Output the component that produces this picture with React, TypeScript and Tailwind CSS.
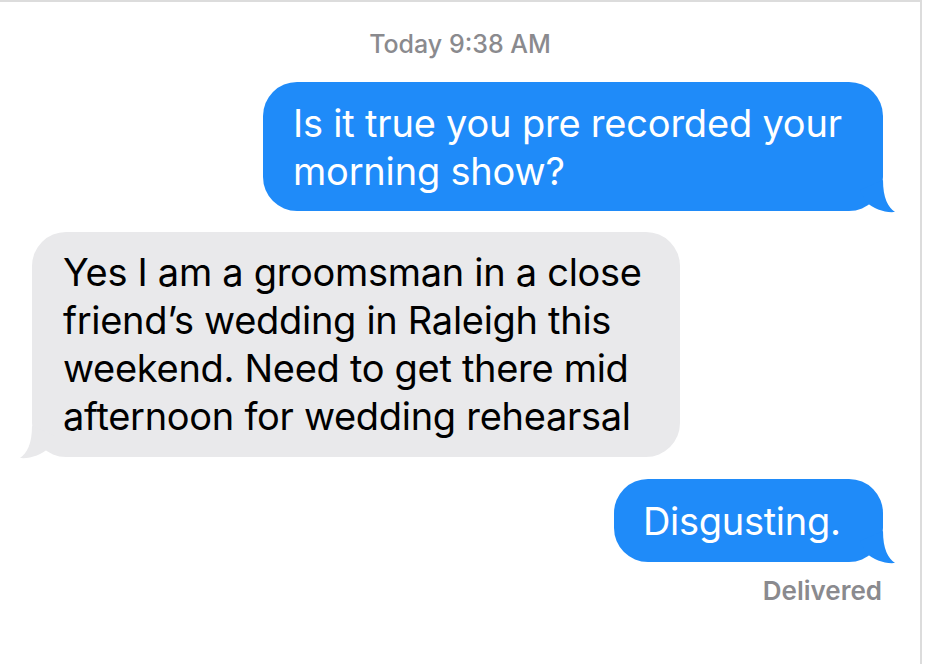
import React from "react";

function Tail({ side, color }: { side: "left" | "right"; color: string }) {
  if (side === "right") {
    return (
      <svg width="50" height="35" viewBox="0 0 50 35" className="absolute -right-[13px] bottom-0 overflow-visible">
        <path d="M37 4 C37 22 42 31 49 36 C39 37 28 33 20 26 L14 14 Z" fill={color} />
      </svg>
    );
  }
  return (
    <svg width="50" height="35" viewBox="0 0 50 35" className="absolute -left-[13px] bottom-0 overflow-visible">
      <g transform="translate(50 0) scale(-1 1)">
        <path d="M37 4 C37 22 42 31 49 36 C39 37 28 33 20 26 L14 14 Z" fill={color} />
      </g>
    </svg>
  );
}

export default function App() {
  return (
    <div className="w-[926px] h-[664px] bg-white flex font-['Inter',sans-serif] overflow-hidden">
      <div className="w-[922px] h-full border-t-2 border-r-2 border-[#dcdcdc] flex flex-col">
        {/* timestamp */}
        <div className="pt-[26px] text-center text-[25px] leading-[32px] font-medium text-[#8a8a8e]">
          Today 9:38 AM
        </div>

        {/* sent */}
        <div className="mt-[22px] flex justify-end pr-[37px]">
          <div className="relative w-[620px] rounded-[34px] bg-[#1f8bf9] pl-[30px] pt-[17px] pb-[16px] text-white text-[38px] leading-[48px] tracking-[-0.2px]">
            Is it true you pre recorded your
            <br />
            morning show?
            <Tail side="right" color="#1f8bf9" />
          </div>
        </div>

        {/* received */}
        <div className="mt-[21px] flex pl-[32px]">
          <div className="relative w-[648px] rounded-[34px] bg-[#e9e9eb] pl-[31px] pt-[16px] pb-[17px] text-black text-[38px] leading-[48px] tracking-[-0.3px]">
            Yes I am a groomsman in a close
            <br />
            friend’s wedding in Raleigh this
            <br />
            weekend. Need to get there mid
            <br />
            afternoon for wedding rehearsal
            <Tail side="left" color="#e9e9eb" />
          </div>
        </div>

        {/* sent */}
        <div className="mt-[22px] flex justify-end pr-[37px]">
          <div className="relative w-[269px] rounded-[34px] bg-[#1f8bf9] pl-[29px] pt-[18px] pb-[17px] text-white text-[38px] leading-[48px] tracking-[-0.3px]">
            Disgusting.
            <Tail side="right" color="#1f8bf9" />
          </div>
        </div>

        <div className="mt-[14px] pr-[38px] text-right text-[26px] leading-[30px] font-semibold text-[#8a8a8e]">
          Delivered
        </div>
      </div>
    </div>
  );
}
